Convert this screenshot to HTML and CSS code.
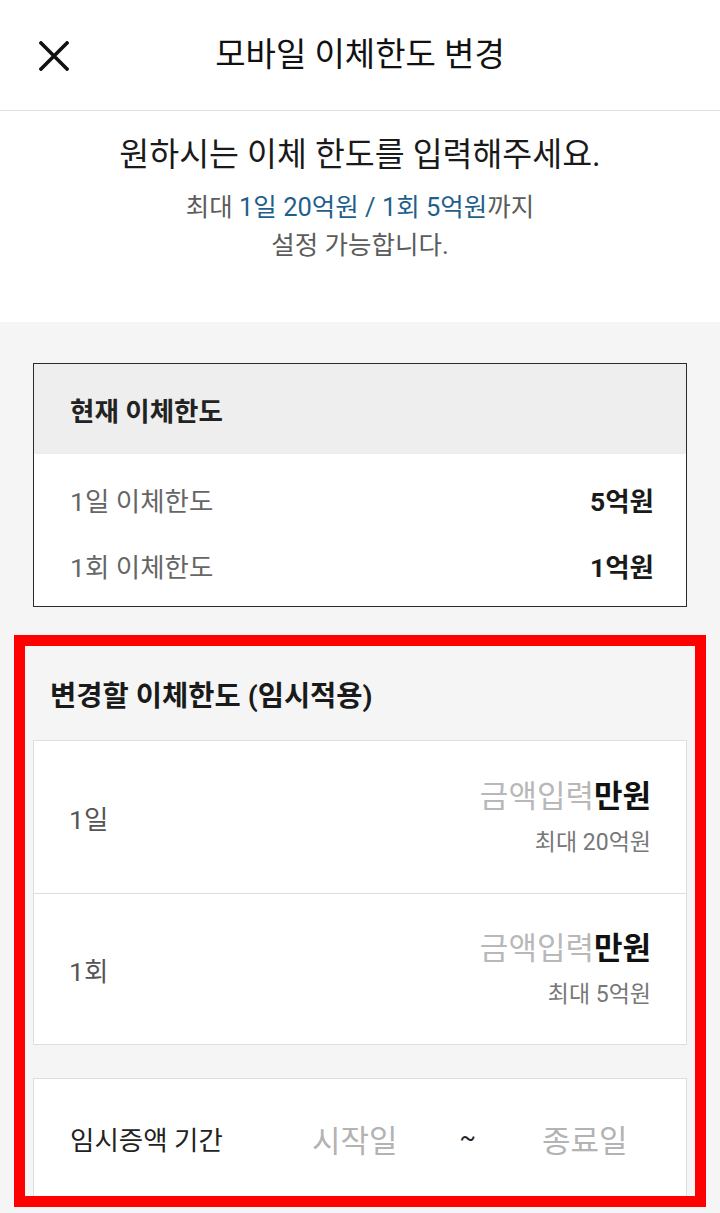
FILE: index.html
```html
<!DOCTYPE html>
<html lang="ko">
<head>
<meta charset="utf-8">
<title>모바일 이체한도 변경</title>
<link rel="stylesheet" href="styles.css">
</head>
<body>
<header class="topbar">
  <div class="close">
    <svg width="30" height="30" viewBox="0 0 30 30" aria-hidden="true">
      <path d="M2 2 L28 28 M28 2 L2 28" stroke="#111" stroke-width="3.6" stroke-linecap="square" fill="none"/>
    </svg>
  </div>
  <h1 class="title">모바일 이체한도 변경</h1>
  <div></div>
</header>

<section class="intro">
  <p class="intro-title">원하시는 이체 한도를 입력해주세요.</p>
  <p class="intro-desc">최대 <span class="hl">1일 20억원 / 1회 5억원</span>까지<br>설정 가능합니다.</p>
</section>

<main class="content">
  <div class="current">
    <div class="current-head">현재 이체한도</div>
    <div class="current-body">
      <div class="current-row"><span class="c-label">1일 이체한도</span><span class="c-value">5억원</span></div>
      <div class="current-row"><span class="c-label">1회 이체한도</span><span class="c-value">1억원</span></div>
    </div>
  </div>

  <section class="highlight">
    <div class="change-head">변경할 이체한도 (임시적용)</div>
    <div class="input-card">
      <div class="input-row">
        <span class="i-label">1일</span>
        <div class="i-right">
          <div class="amount"><span class="ph">금액입력</span><span class="unit">만원</span></div>
          <div class="max">최대 20억원</div>
        </div>
      </div>
      <div class="input-row">
        <span class="i-label">1회</span>
        <div class="i-right">
          <div class="amount"><span class="ph">금액입력</span><span class="unit">만원</span></div>
          <div class="max">최대 5억원</div>
        </div>
      </div>
    </div>
    <div class="period-card">
      <span class="p-label">임시증액 기간</span>
      <span class="p-date p-start">시작일</span>
      <span class="p-tilde">~</span>
      <span class="p-date p-end">종료일</span>
    </div>
  </section>
</main>
</body>
</html>
```
FILE: styles.css
```css
* { box-sizing: border-box; }
html, body { margin: 0; padding: 0; }
body {
  width: 720px;
  height: 1213px;
  overflow: hidden;
  background: #f5f5f5;
  font-family: "Roboto", "Noto Sans CJK KR", sans-serif;
  color: #111;
}
p { margin: 0; }

.topbar {
  height: 111px;
  background: #fff;
  border-bottom: 1px solid #e3e3e3;
  display: grid;
  grid-template-columns: 1fr auto 1fr;
  align-items: center;
}
.close { padding-left: 39px; display: flex; align-items: center; height: 30px; margin-top: 1px; }
.title {
  margin: 0;
  font-size: 33px;
  font-weight: 400;
  line-height: 40px;
  color: #111;
}

.intro {
  background: #fff;
  height: 211px;
  padding-top: 24px;
  text-align: center;
}
.intro-title {
  font-size: 32.5px;
  line-height: 40px;
  color: #1a1a1a;
}
.intro-desc {
  margin-top: 13px;
  font-size: 25.5px;
  line-height: 38px;
  color: #5c5c5c;
}
.hl { color: #1f5f8b; }

.content { padding: 41px 0 0; }

.current {
  margin: 0 33px;
  border: 1px solid #2b2b2b;
  background: #fff;
}
.current-head {
  height: 90px;
  background: #eeeeee;
  display: flex;
  align-items: center;
  padding-left: 36px;
  font-size: 26.5px;
  font-weight: 700;
  color: #222;
}
.current-body { padding: 12px 0 8px; }
.current-row {
  height: 66px;
  display: flex;
  justify-content: space-between;
  align-items: center;
  padding: 0 32px 0 36px;
  font-size: 26.5px;
}
.c-label { color: #666; }
.c-value { font-weight: 700; color: #1a1a1a; }

.highlight {
  margin: 28px 14px 0;
  border: 11px solid #ff0000;
  padding: 0 8px;
  height: 572px;
  overflow: hidden;
  background: #f5f5f5;
}
.change-head {
  height: 94px;
  display: flex;
  align-items: center;
  padding-left: 17px;
  font-size: 28.5px;
  font-weight: 700;
  color: #1a1a1a;
}
.input-card {
  background: #fff;
  border: 1px solid #dedede;
}
.input-row {
  height: 152px;
  display: flex;
  justify-content: space-between;
  align-items: center;
  padding: 0 35px 0 35px;
}
.input-row + .input-row { border-top: 1px solid #dedede; height: 151px; }
.i-label { font-size: 26.5px; color: #555; }
.i-right { text-align: right; }
.amount { font-size: 31px; line-height: 40px; }
.ph { color: #b8b8b8; }
.unit { font-weight: 700; color: #111; }
.max { margin-top: 11px; font-size: 23px; line-height: 30px; color: #777; }

.period-card {
  margin-top: 33px;
  height: 130px;
  background: #fff;
  border: 1px solid #dedede;
  display: flex;
  align-items: center;
  padding: 0 0 10px 36px;
}
.p-label { font-size: 26.5px; color: #222; width: 242px; }
.p-date { font-size: 31px; color: #b3b3b3; }
.p-tilde { font-size: 24px; color: #222; margin-left: 62px; margin-right: 66px; }
```
